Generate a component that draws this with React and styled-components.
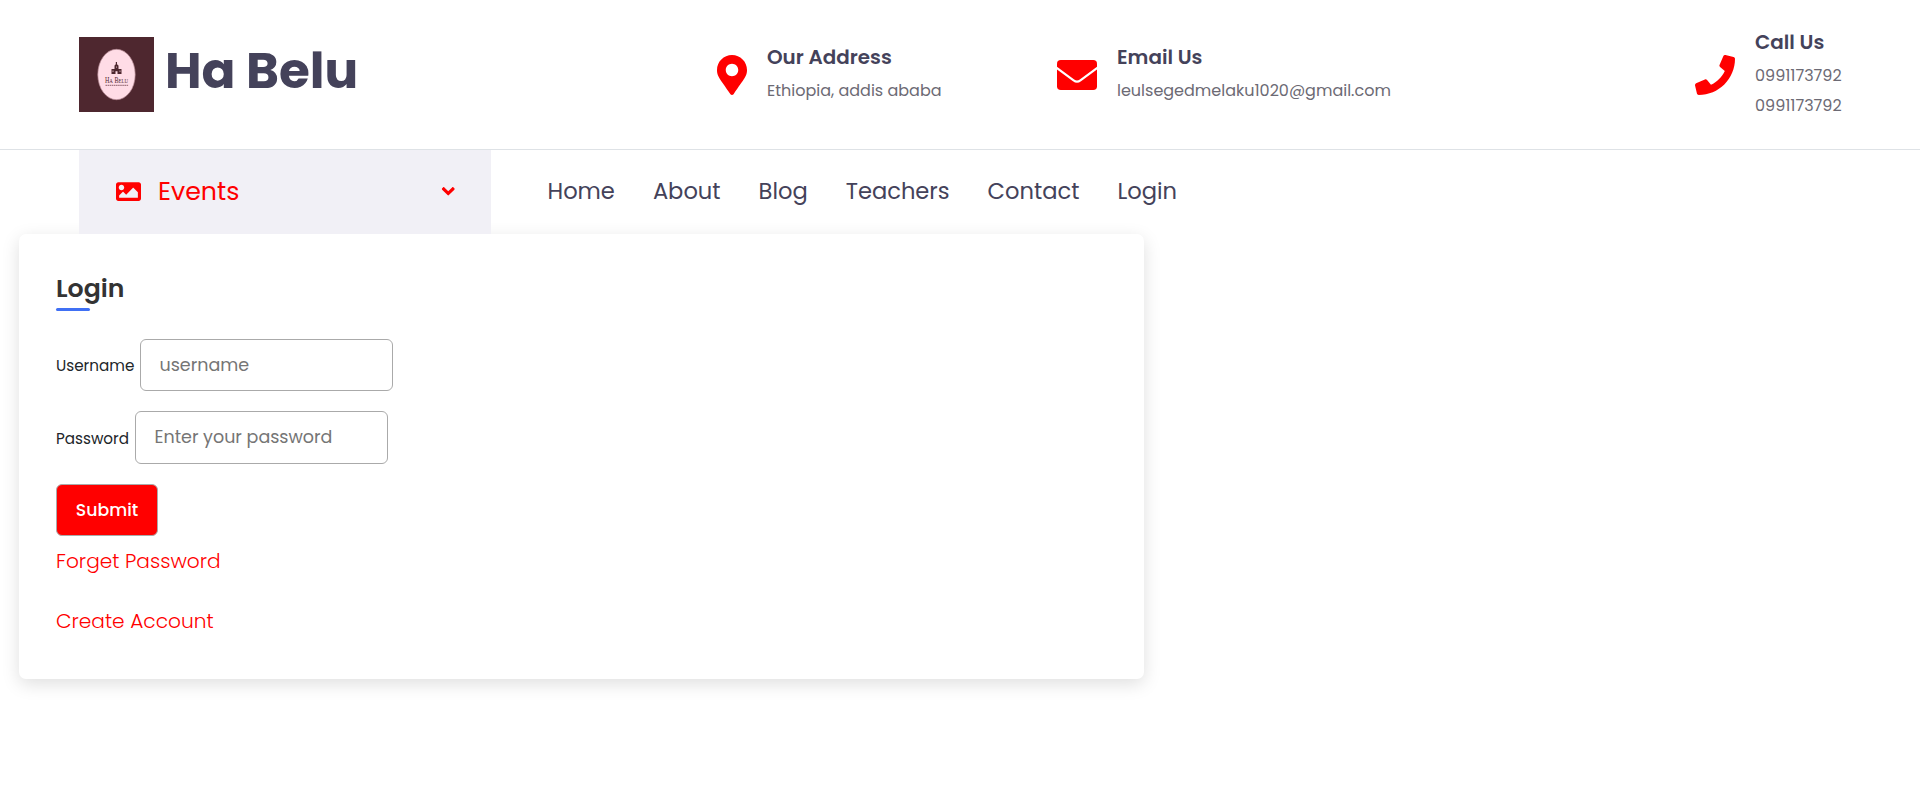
import React from "react";
import styled, { createGlobalStyle } from "styled-components";
import { FaMapMarkerAlt, FaPhone, FaImage, FaAngleDown } from "react-icons/fa";

const GlobalStyle = createGlobalStyle`
  *, *::before, *::after { box-sizing: border-box; }
  body {
    margin: 0;
    background: #fff;
    color: #212529;
    font-family: Poppins, Inter, "Open Sans", sans-serif;
  }
  h1, h2, h6, p { margin: 0; }
  a { text-decoration: none; }
`;

const Page = styled.div`
  min-height: 100vh;
`;

const Header = styled.header`
  display: flex;
  align-items: center;
  height: 150px;
  padding: 0 79px;
  border-bottom: 1px solid #dee2e6;
`;

const Brand = styled.a`
  display: flex;
  gap: 11px;
  width: 638px;
  height: 75px;
  color: #44425a;
`;

const BrandName = styled.h1`
  font-size: 50px;
  font-weight: 700;
  line-height: 67px;
  white-space: nowrap;
`;

const Contact = styled.div`
  display: flex;
  align-items: center;
  width: ${(p) => p.$width}px;
  color: #f00;
  > svg {
    flex: none;
    width: ${(p) => p.$icon}px;
    height: 40px;
    margin-top: 1px;
  }
`;

const ContactBody = styled.div`
  margin-left: 20px;
  padding-bottom: 1px;
  white-space: nowrap;
`;

const ContactTitle = styled.h6`
  margin-bottom: 4px;
  color: #44425a;
  font-size: 19.9px;
  font-weight: 600;
  line-height: 30px;
`;

const ContactText = styled.p`
  color: #6c6a74;
  font-size: 16px;
  font-weight: 400;
  line-height: 30px;
`;

const NavRow = styled.div`
  display: flex;
  height: 84px;
  padding-left: 79px;
`;

const Events = styled.a`
  display: flex;
  align-items: center;
  width: 412px;
  padding: 0 33px 2px 37px;
  background: #f1f0f6;
  color: #f00;
`;

const EventsLabel = styled.span`
  flex: 1;
  margin-left: 17px;
  padding-top: 1px;
  font-size: 25.3px;
`;

const Nav = styled.nav`
  display: flex;
  align-items: center;
  gap: 38px;
  padding: 0 0 2px 56.5px;
`;

const NavLink = styled.a`
  color: #44425a;
  font-size: 22.6px;
`;

const Card = styled.main`
  width: 1125px;
  height: 445px;
  margin-left: 19px;
  padding: 37px;
  border-radius: 7px;
  background: #fff;
  box-shadow: 0 5px 18px rgba(0, 0, 0, 0.13);
`;

const Title = styled.h2`
  padding-bottom: 1px;
  color: #333;
  font-size: 25.2px;
  font-weight: 600;
  line-height: 36px;
  &::after {
    content: "";
    display: block;
    width: 34px;
    height: 3px;
    margin-top: 1px;
    border-radius: 2px;
    background: #4070f4;
  }
`;

const Field = styled.div`
  display: flex;
  align-items: center;
  height: ${(p) => p.$height}px;
  margin-top: ${(p) => p.$top}px;
`;

const Label = styled.label`
  width: ${(p) => p.$width}px;
  padding-top: 1px;
  color: #212529;
  font-size: 15.2px;
`;

const Input = styled.input`
  width: 253px;
  height: 100%;
  padding: 0 18.5px 1px;
  border: 1px solid #aaa;
  border-radius: 6px;
  outline: none;
  background: #fff;
  font: inherit;
  font-size: 17.5px;
  &::placeholder { color: #757575; opacity: 1; }
`;

const Submit = styled.button`
  display: block;
  width: 102px;
  height: 52px;
  margin-top: 20px;
  padding: 0;
  border: 1px solid #aaa;
  border-radius: 6px;
  background: #f00;
  color: #fff;
  font: inherit;
  font-size: 17.3px;
  font-weight: 500;
`;

const FormLink = styled.a`
  display: block;
  margin-top: ${(p) => p.$top}px;
  color: #f00;
  font-size: 20.15px;
  font-weight: 300;
  line-height: 30px;
`;

const Logo = () => (
  <svg width="75" height="75" viewBox="0 0 75 75">
    <rect width="75" height="75" fill="#4e272f" />
    <ellipse cx="37.5" cy="37.5" rx="18.7" ry="25.2" fill="#ffdce6" stroke="#b58a94" strokeWidth="0.7" />
    <path
      d="M32.5 37v-5h3v-3.5l1.3-1.2v-2.2h1.2v2.2l1.5 1.2V32h3v5h-4v-2.8h-2V37z"
      fill="#4e272f"
    />
    <path d="M34 33.5v1.5M41 33.5v1.5M37.5 29.5v1.2" stroke="#ffdce6" strokeWidth="0.7" />
    <text x="37.5" y="45.5" textAnchor="middle" textLength="23" lengthAdjust="spacingAndGlyphs"
      fontFamily="'Liberation Serif', serif" fontSize="8" fill="#4e272f">
      H<tspan fontSize="6.5">A</tspan> B<tspan fontSize="6.5">ELU</tspan>
    </text>
    <path d="M26.5 48.3h23" stroke="#8b606b" strokeWidth="1" strokeDasharray="1.6 0.5" />
  </svg>
);

const EnvelopeIcon = () => (
  <svg viewBox="0 0 40 40">
    <rect y="5" width="40" height="30" rx="3.75" fill="currentColor" />
    <path d="M-1 12.4L16.6 25.3Q20 27.9 23.4 25.3L41 12.4" fill="none" stroke="#fff" strokeWidth="2.1" />
  </svg>
);

const contacts = [
  { Icon: FaMapMarkerAlt, icon: 30, width: 340, title: "Our Address", lines: ["Ethiopia, addis ababa"] },
  { Icon: EnvelopeIcon, icon: 40, width: 638, title: "Email Us", lines: ["leulsegedmelaku1020@gmail.com"] },
  { Icon: FaPhone, icon: 40, width: 146, title: "Call Us", lines: ["0991173792", "0991173792"] },
];

const links = ["Home", "About", "Blog", "Teachers", "Contact", "Login"];

export default function App() {
  return (
    <Page>
      <GlobalStyle />
      <Header>
        <Brand>
          <Logo />
          <BrandName>Ha Belu</BrandName>
        </Brand>
        {contacts.map(({ Icon, icon, width, title, lines }) => (
          <Contact key={title} $width={width} $icon={icon}>
            <Icon />
            <ContactBody>
              <ContactTitle>{title}</ContactTitle>
              {lines.map((line, i) => (
                <ContactText key={i}>{line}</ContactText>
              ))}
            </ContactBody>
          </Contact>
        ))}
      </Header>
      <NavRow>
        <Events>
          <FaImage size={25} />
          <EventsLabel>Events</EventsLabel>
          <FaAngleDown size={20.5} />
        </Events>
        <Nav>
          {links.map((name) => (
            <NavLink key={name}>{name}</NavLink>
          ))}
        </Nav>
      </NavRow>
      <Card>
        <Title>Login</Title>
        <Field $top={27} $height={52}>
          <Label $width={84}>Username</Label>
          <Input placeholder="username" />
        </Field>
        <Field $top={20} $height={53}>
          <Label $width={79}>Password</Label>
          <Input type="password" placeholder="Enter your password" />
        </Field>
        <Submit type="button">Submit</Submit>
        <FormLink $top={10}>Forget Password</FormLink>
        <FormLink $top={30}>Create Account</FormLink>
      </Card>
    </Page>
  );
}
